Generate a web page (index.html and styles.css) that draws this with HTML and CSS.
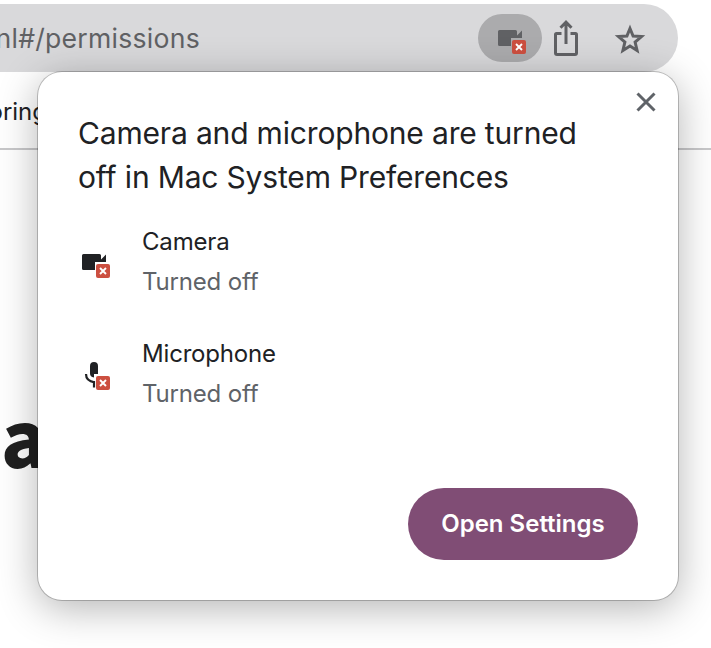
FILE: index.html
```html
<!DOCTYPE html>
<html lang="en">
<head>
<meta charset="utf-8">
<title>Permissions</title>
<link rel="stylesheet" href="styles.css">
</head>
<body>
<svg class="defs" width="0" height="0" aria-hidden="true">
  <symbol id="camera" viewBox="0 0 28 26">
    <path fill="currentColor" d="M1.500 1H17.500Q19 1 19 2.500V6.500L24 1.500V9H13V17H1.500Q0 17 0 15.500V2.500Q0 1 1.500 1Z"/>
    <rect x="14" y="11" width="14" height="14" rx="2" fill="#cc4f40"/>
    <path d="M18 15l6 6M24 15l-6 6" stroke="#fff" stroke-width="1.900" fill="none"/>
  </symbol>
  <symbol id="mic" viewBox="0 0 28 28">
    <path fill="currentColor" d="M8 4a4 4 0 0 1 8 0V12H12V15.500Q8 15 8 11.500Z"/>
    <path d="M4 12C4 17 7 19.500 12.500 20.300M12 19V25.500" fill="none" stroke="currentColor" stroke-width="2.200"/>
    <rect x="14" y="14" width="14" height="14" rx="2" fill="#cc4f40"/>
    <path d="M18 18l6 6M24 18l-6 6" stroke="#fff" stroke-width="1.900" fill="none"/>
  </symbol>
</svg>
<header class="omnibox">
  <span class="url">nl#/permissions</span>
  <span class="chip"><svg class="chip-icon" width="28" height="26"><use href="#camera"/></svg></span>
  <svg class="share" width="26" height="38" viewBox="0 0 26 38" fill="none" stroke="#606164" stroke-width="3">
    <path d="M8.500 13.500H3.500Q2.500 13.500 2.500 14.500V33Q2.500 34.500 4 34.500H22Q23.500 34.500 23.500 33V14.500Q23.500 13.500 22.500 13.500H17.500M13 24V3M7.500 7.700L13 2.200L18.500 7.700"/>
  </svg>
  <svg class="star" width="32" height="31" viewBox="0 0 32 31" fill="none" stroke="#606164" stroke-width="3">
    <path d="M16 4.500L19.100 12L27.500 12.600L21.100 18L23.100 26.500L16 22L8.900 26.500L10.900 18L4.500 12.600L12.900 12Z"/>
  </svg>
</header>
<nav class="bookmarks"><span class="bookmark">oring</span></nav>
<main class="page"><h1 class="headline">a</h1></main>
<section class="popup">
  <svg class="close" width="20" height="20" viewBox="0 0 20 20" fill="none" stroke="#5f6368" stroke-width="3"><path d="M1.500 1.500L18.500 18.500M18.500 1.500L1.500 18.500"/></svg>
  <h2 class="title">Camera and microphone are turned<br>off in Mac System Preferences</h2>
  <div class="row">
    <svg class="row-icon" width="28" height="26"><use href="#camera"/></svg>
    <div><div class="name">Camera</div><div class="state">Turned off</div></div>
  </div>
  <div class="row">
    <svg class="row-icon mic" width="28" height="28"><use href="#mic"/></svg>
    <div><div class="name">Microphone</div><div class="state">Turned off</div></div>
  </div>
  <button class="action">Open Settings</button>
</section>
</body>
</html>
```
FILE: styles.css
```css
* { box-sizing: border-box; }
body {
  margin: 0;
  height: 648px;
  position: relative;
  overflow: hidden;
  background: #fff;
  color: #202124;
  font-family: Inter, "Liberation Sans", sans-serif;
}
.defs { position: absolute; }
.omnibox {
  display: flex;
  align-items: center;
  width: 678px;
  height: 68px;
  margin-top: 4px;
  border-radius: 0 34px 34px 0;
  background: #d9d9db;
}
.url {
  display: flex;
  justify-content: flex-end;
  width: 200px;
  flex: none;
  font-size: 26.6px;
  line-height: 36px;
  letter-spacing: 0.25px;
  color: #606164;
}
.chip {
  flex: none;
  width: 64px;
  height: 48px;
  margin-left: 278px;
  padding: 15px 0 0 20px;
  border-radius: 24px;
  background: #ababad;
  color: #606164;
}
.chip-icon { display: block; }
.share { flex: none; margin: 2px 0 0 11px; }
.star { flex: none; margin-left: 35px; margin-top: 2px; }
.bookmarks {
  display: flex;
  align-items: center;
  height: 78px;
  border-bottom: 2px solid #c8c8ca;
}
.bookmark {
  display: flex;
  justify-content: flex-end;
  width: 47px;
  flex: none;
  padding-top: 3px;
  font-size: 24px;
  line-height: 30px;
}
.page { padding: 229px 0 0 0; }
.headline {
  margin: 0 0 0 1px;
  font: 900 77px/112px "Noto Sans CJK JP", sans-serif;
  color: #202020;
}
.popup {
  position: absolute;
  left: 38px;
  top: 72px;
  width: 640px;
  height: 528px;
  padding: 39px 40px 40px;
  border-radius: 24px;
  background: #fff;
  box-shadow: 0 0 0 1px rgba(0, 0, 0, 0.22), 0 8px 40px rgba(0, 0, 0, 0.3);
}
.close { position: absolute; right: 22px; top: 20px; }
.title {
  margin: 0 0 23px;
  font-size: 30px;
  font-weight: 400;
  line-height: 44px;
  letter-spacing: -0.17px;
  white-space: nowrap;
}
.row { display: flex; height: 80px; margin-bottom: 32px; line-height: 40px; }
.row-icon { flex: none; margin: 31px 32px 0 4px; }
.row-icon.mic { margin-top: 28px; }
.name, .state { font-size: 24px; letter-spacing: -0.18px; }
.state { color: #5f6368; }
.action {
  display: block;
  width: 230px;
  height: 72px;
  margin: 74px 0 0 auto;
  padding: 0;
  border: 0;
  border-radius: 36px;
  background: #804d75;
  color: #fff;
  font: 600 24px/72px Inter, sans-serif;
}
```
